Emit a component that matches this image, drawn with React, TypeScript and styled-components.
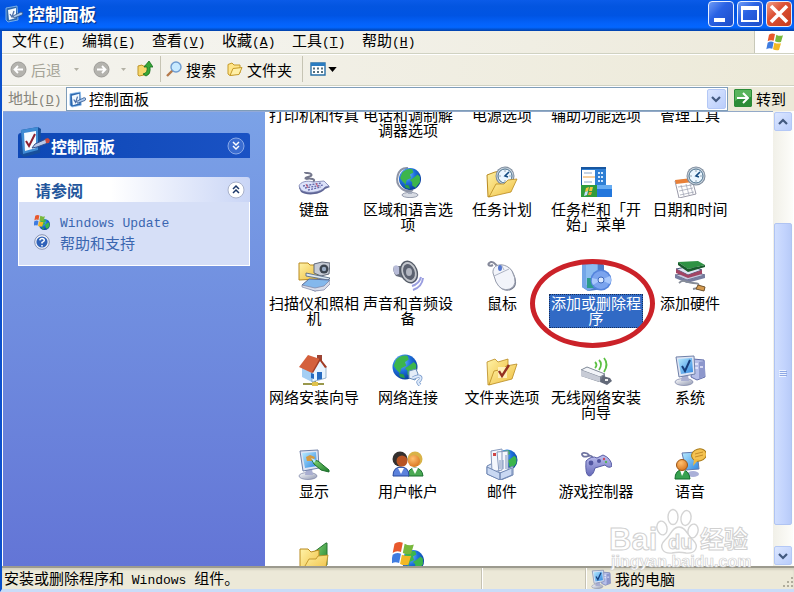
import React from "react";
import styled, { createGlobalStyle, css } from "styled-components";

const GlobalStyle = createGlobalStyle`
  * { box-sizing: border-box; }
  html, body, #root { height: 100%; margin: 0; }
  body {
    overflow: hidden;
    font-family: "Noto Sans CJK SC", sans-serif;
    font-size: 15px;
    line-height: 15px;
    color: #000;
  }
  button, input { font: inherit; color: inherit; margin: 0; padding: 0; border: 0; background: none; }
  svg { display: block; flex: none; }
`;

/* ---------- window frame ---------- */

const Window = styled.div`
  display: flex;
  flex-direction: column;
  height: 100vh;
  background: #ece9d8;
  border-left: 2px solid #0b50cc;
  border-bottom: 3px solid #c9dcf8;
`;

const TitleBar = styled.header`
  display: flex;
  align-items: center;
  gap: 5px;
  height: 31px;
  flex: none;
  margin-left: -2px;
  padding: 0 2px 3px 5px;
  background: linear-gradient(#0a5be8 0, #0355e0 20%, #0054e3 50%, #0462fa 75%, #0366ff 88%, #0140a8 100%);
`;

const TitleText = styled.h1`
  flex: 1;
  margin: 0;
  font-size: 17px;
  line-height: 20px;
  font-weight: 700;
  color: #fff;
  text-shadow: 1px 1px 1px #0a2f80;
`;

const Captions = styled.div`
  display: flex;
  gap: 3px;
`;

const CaptionButton = styled.button<{ $close?: boolean }>`
  display: grid;
  place-items: center;
  width: 26px;
  height: 26px;
  border: 1px solid #e6eeff;
  border-radius: 4px;
  background: ${(p) =>
    p.$close
      ? "linear-gradient(135deg, #f0a088, #dc5236 40%, #c53a1c)"
      : "linear-gradient(135deg, #6f9bf5, #2a62e4 40%, #1c4cc8)"};
`;

const Latin = styled.span`
  font-family: "Liberation Mono", monospace;
  font-size: 13px;
`;

const MenuBar = styled.nav`
  display: flex;
  flex: none;
  height: 23px;
  padding-left: 1px;
  border-bottom: 1px solid #d0d2c2;
  background: linear-gradient(90deg, #f6f6f3, #edeadb);
`;

const MenuButton = styled.button`
  width: 70px;
  padding: 0 9px 2px;
  text-align: left;
  white-space: nowrap;
`;

const Brand = styled.div`
  display: grid;
  place-items: center;
  width: 40px;
  margin-left: auto;
  background: #fff;
  border-left: 1px solid #c8c8b8;
`;

const ToolBar = styled.div`
  display: flex;
  align-items: center;
  flex: none;
  height: 32px;
  padding: 0 0 2px 8px;
  border-top: 1px solid #fff;
  border-bottom: 1px solid #d0d2c2;
  background: linear-gradient(90deg, #f4f3ee, #edead9);
`;

const ToolButton = styled.button<{ $gap?: number; $after?: number }>`
  display: flex;
  align-items: center;
  gap: ${(p) => p.$gap ?? 4}px;
  margin-right: ${(p) => p.$after ?? 0}px;
  white-space: nowrap;
  &:disabled { color: #a5a498; }
`;

const Divider = styled.span<{ $after: number }>`
  width: 1px;
  height: 26px;
  margin-right: ${(p) => p.$after}px;
  background: #c6c4b4;
`;

const AddressBar = styled.div`
  display: flex;
  align-items: center;
  flex: none;
  height: 25px;
  padding: 0 8px 0 6px;
  border-top: 1px solid #fff;
  background: linear-gradient(90deg, #f4f3ee, #ece9d8);
`;

const AddressLabel = styled.label`
  width: 58px;
  color: #85847a;
  white-space: nowrap;
`;

const AddressBox = styled.div`
  display: flex;
  align-items: center;
  flex: 1;
  height: 24px;
  padding: 0 1px 0 2px;
  border: 1px solid #7f9db9;
  background: #fff;
`;

const AddressInput = styled.input`
  flex: 1;
  min-width: 0;
  height: 20px;
  margin-left: 3px;
  padding-bottom: 2px;
  outline: none;
`;

const BlueButton = styled.button<{ $w: number; $h: number }>`
  display: grid;
  place-items: center;
  flex: none;
  width: ${(p) => p.$w}px;
  height: ${(p) => p.$h}px;
  border: 1px solid #b4c8f6;
  border-radius: 2px;
  background: linear-gradient(135deg, #dbe6ff, #b9cdfb);
`;

const GoButton = styled.button`
  display: flex;
  align-items: center;
  gap: 4px;
  margin-left: 6px;
  padding-bottom: 2px;
`;

/* ---------- body ---------- */

const Body = styled.div`
  display: flex;
  flex: 1;
  min-height: 0;
  padding-left: 1px;
  background: #fff;
`;

const Sidebar = styled.aside`
  flex: none;
  width: 262px;
  padding: 21px 15px 0;
  background: linear-gradient(#7ba2e7, #6375d6);
  border-top: 1px solid #93a9d8;
`;

const PanelTitle = styled.h2<{ $light?: boolean }>`
  display: flex;
  align-items: center;
  justify-content: space-between;
  height: 25px;
  margin: 0;
  padding: 0 5px 0 ${(p) => (p.$light ? 17 : 0)}px;
  font-size: 16px;
  font-weight: 700;
  line-height: 20px;
  border-radius: 3px 3px 0 0;
  color: ${(p) => (p.$light ? "#23569c" : "#fff")};
  background: ${(p) =>
    p.$light
      ? "linear-gradient(90deg, #fff 40%, #c9d5f6)"
      : "linear-gradient(90deg, #0d47b5, #1a52c4)"};
`;

const TitleGroup = styled.span`
  display: flex;
  align-items: center;
  gap: 1px;
  height: 25px;
`;

const Emblem = styled.span`
  margin-top: -8px;
`;

const SidePanel = styled.section`
  margin-top: 19px;
`;

const PanelBody = styled.ul`
  display: flex;
  flex-direction: column;
  gap: 3px;
  height: 64px;
  margin: 0;
  padding: 13px 0 0 15px;
  list-style: none;
  border: 1px solid #fff;
  border-top: 0;
  background: #d6dff7;
`;

const SideLink = styled.a`
  display: flex;
  align-items: center;
  gap: 10px;
  height: 16px;
  color: #3a66b0;
  text-decoration: none;
`;

const Content = styled.main`
  flex: 1;
  min-width: 0;
  overflow: hidden;
  padding-left: 2px;
  border-top: 1px solid #93a9c8;
`;

const IconGrid = styled.ul`
  display: grid;
  grid-template-columns: repeat(auto-fill, 94px);
  grid-auto-rows: 94px;
  margin: -40px 0 0;
  padding: 0;
  list-style: none;
`;

const Cell = styled.li`
  position: relative;
`;

const ItemButton = styled.button`
  display: flex;
  flex-direction: column;
  align-items: center;
  gap: 2px;
  width: 94px;
`;

const IconSlot = styled.span`
  width: 32px;
  height: 32px;
`;

const ItemLabel = styled.span<{ $selected?: boolean }>`
  max-width: 94px;
  padding: 1px 2px 3px;
  word-break: break-all;
  text-spacing-trim: space-all;
  ${(p) =>
    p.$selected &&
    css`
      color: #fff;
      background: #316ac5;
      outline: 1px dotted #16305c;
      outline-offset: -1px;
    `}
`;

const Ring = styled.span`
  position: absolute;
  left: -19px;
  top: -1px;
  width: 125px;
  height: 89px;
  border: 5px solid #cb2229;
  border-radius: 50%;
  pointer-events: none;
`;

const Watermark = styled.div`
  position: absolute;
  right: 43px;
  bottom: 17px;
  pointer-events: none;
`;

const ScrollBar = styled.div`
  display: flex;
  flex-direction: column;
  flex: none;
  width: 20px;
  margin-right: 1px;
  padding: 1px;
  background: linear-gradient(90deg, #f1f0e8, #fdfdfa);
`;

const Track = styled.div`
  display: flex;
  flex-direction: column;
  flex: 1;
`;

const TrackSpace = styled.div<{ $grow: number }>`
  flex: ${(p) => p.$grow};
`;

const Thumb = styled.div`
  display: grid;
  place-items: center;
  flex: 302;
  border: 1px solid #b0c4f2;
  border-radius: 2px;
  background: linear-gradient(90deg, #d0defe, #c2d3fd 60%, #b8cbf8);
`;

const StatusBar = styled.footer`
  display: flex;
  flex: none;
  height: 23px;
  border-top: 2px solid #9c9a8e;
  background: #ece9d8;
  box-shadow: inset 0 2px 2px #d4d1c0;
`;

const StatusCell = styled.div<{ $width?: number }>`
  display: flex;
  align-items: center;
  gap: 4px;
  ${(p) => (p.$width ? `width: ${p.$width}px; padding-left: 5px;` : "flex: 1; padding-left: 2px;")}
  white-space: pre;
  & + & {
    border-left: 1px solid #c5c2b2;
    box-shadow: inset 1px 0 #fff;
  }
`;

const Grip = styled.span`
  align-self: flex-end;
  margin-left: auto;
`;

/* ---------- artwork ---------- */

const HiddenSvg = styled.svg`
  position: absolute;
`;

const Defs = () => (
  <HiddenSvg width="0" height="0" aria-hidden="true">
    <defs>
      <radialGradient id="globe" cx="35%" cy="30%" r="75%">
        <stop offset="0" stopColor="#7cc4ff" />
        <stop offset="0.5" stopColor="#1d6fdc" />
        <stop offset="1" stopColor="#083a96" />
      </radialGradient>
      <linearGradient id="folder" x1="0" y1="0" x2="1" y2="1">
        <stop offset="0" stopColor="#fff3a8" />
        <stop offset="1" stopColor="#eebc3c" />
      </linearGradient>
      <linearGradient id="screen" x1="0" y1="0" x2="1" y2="1">
        <stop offset="0" stopColor="#b9ecff" />
        <stop offset="1" stopColor="#2f86e0" />
      </linearGradient>
      <linearGradient id="metal" x1="0" y1="0" x2="1" y2="1">
        <stop offset="0" stopColor="#ffffff" />
        <stop offset="1" stopColor="#8e96b0" />
      </linearGradient>
      <linearGradient id="lilac" x1="0" y1="0" x2="0" y2="1">
        <stop offset="0" stopColor="#c0c2f0" />
        <stop offset="1" stopColor="#6468b8" />
      </linearGradient>
      <linearGradient id="green" x1="0" y1="0" x2="1" y2="1">
        <stop offset="0" stopColor="#86d878" />
        <stop offset="1" stopColor="#1c7c2a" />
      </linearGradient>
      <radialGradient id="orange" cx="40%" cy="30%" r="75%">
        <stop offset="0" stopColor="#ffc070" />
        <stop offset="1" stopColor="#d8731c" />
      </radialGradient>
    </defs>
  </HiddenSvg>
);

const Svg = ({ s = 32, v = 32, children }: { s?: number; v?: number; children: React.ReactNode }) => (
  <svg width={s} height={s} viewBox={`0 0 ${v} ${v}`} fill="none" aria-hidden="true">
    {children}
  </svg>
);

const Checklist = ({ s }: { s: number }) => (
  <Svg s={s}>
    <path d="M3 4 20 1l3 2-1 24-16 4-4-3z" fill="#174f9c" />
    <path d="M3 4 20 1v23L5 28z" fill="#3f8bd4" />
    <path d="m6 7 12-2v17L7 25z" fill="#f4faff" />
    <path d="m8 15 3 5 6-12" stroke="#8c2030" strokeWidth="2" />
    <path d="m17 18 11-5 3 2-1 2-11 4-5 1z" fill="#b9c8e8" stroke="#34508c" />
    <path d="m27 13 3-1 2 2-1 3-3 0z" fill="#c94842" />
  </Svg>
);

/* Small version for bars: a blue-edged sheet with the pen lying across it. */
const ChecklistSmall = ({ s }: { s: number }) => (
  <Svg s={s} v={18}>
    <path d="m1 3 11-2 1 14-10 2-2-2z" fill="#2c68b0" stroke="#8fc0f0" strokeWidth="0.8" />
    <path d="m3 5 8-2v10l-7 2z" fill="#f2f9ff" />
    <path d="m5 9 2 3 2-6" stroke="#4b6ea8" strokeWidth="1.3" />
    <path d="m8 11 8-4 2 1-1 2-8 3z" fill="#a9c8ee" stroke="#2a5088" strokeWidth="0.8" />
  </Svg>
);

const Globe = ({ cx, cy, r }: { cx: number; cy: number; r: number }) => (
  <g transform={`translate(${cx} ${cy}) scale(${r / 10})`}>
    <circle r="10" fill="url(#globe)" />
    <path d="M-7-6Q-3-10 2-9l1 3-3 2 1 3-4 2-1 4-3-3-2-3zM3-1l4-3 2 2 0 5-4 5-3-2 0-3-2-2z" fill="#3cb54c" />
    <path d="M-5 5-1 6 0 9l-4-1z" fill="#2a9c48" />
  </g>
);

const Flag = () => (
  <g>
    <path d="M6 4q4-3 9-1l-2 10q-5-2-9 1z" fill="#e8582c" />
    <path d="M17 4q5 3 10 1l-3 10q-5 1-9-1z" fill="#78b83c" />
    <path d="M4 16q4-3 9-1l-2 10q-5-2-9 1z" fill="#3f7ce0" />
    <path d="M14 16q5 2 10 1l-3 10q-5 1-9-1z" fill="#f2b824" />
  </g>
);

const Folder = () => (
  <g stroke="#b98a20" strokeWidth="0.8">
    <path d="M1 8 9 5l3 3 10-3v19L2 31z" fill="url(#folder)" />
    <path d="m3 31 5-14 10-2 2-3 11-2-5 15z" fill="url(#folder)" />
  </g>
);

const Clock = ({ cx, cy }: { cx: number; cy: number }) => (
  <g transform={`translate(${cx} ${cy})`}>
    <circle r="9.5" fill="#7d8b9c" />
    <circle r="8.5" fill="#ccd6e0" />
    <circle r="7" fill="#eaf6ff" stroke="#4a708c" />
    <path d="M0-5.5v1M0 5.5v-1M-5.5 0h1M5.5 0h-1" stroke="#456" />
    <path d="m4-4-4 4 3 1" stroke="#124a80" strokeWidth="1.6" />
  </g>
);

const Monitor = () => (
  <g>
    <ellipse cx="10" cy="28" rx="9" ry="3.5" fill="url(#metal)" stroke="#7780a4" strokeWidth="0.7" />
    <path d="M8 21h6l1 6H7z" fill="#a9aed0" />
    <path d="m2 3 18-1 1 18L5 23z" fill="#dfe5f4" stroke="#7080a8" />
    <path d="m4 5 14-1 1 14-12 2z" fill="url(#screen)" />
  </g>
);

const art: Record<string, React.ReactNode> = {
  keyboard: (
    <>
      <path d="M15 16c4-3-3-4-7-3M8 13c-3-2 8-2 5-5-1-2-6 0-6-2" stroke="#74778c" strokeWidth="2" />
      <path d="M1 22c1-5 8-7 14-5l11-1 6 5-5 2c-4 6-19 7-24 3z" fill="#5e6494" />
      <path d="M1 20c1-4 8-6 14-4l11-1 5 5-4 1c-4 6-19 7-24 3z" fill="#dce2fa" stroke="#777fae" strokeWidth="0.8" />
      <path d="m5 20 19-3M7 22l18-3M10 24l13-3" stroke="#6267aa" strokeWidth="1.3" strokeDasharray="2 1.2" />
      <path d="m8 18 2 4M18 17l2 4" stroke="#c9586c" />
    </>
  ),
  region: (
    <>
      <ellipse cx="18" cy="29" rx="8" ry="2.6" fill="#d8dce4" stroke="#80889c" strokeWidth="0.8" />
      <path d="M16 23h4v5h-4z" fill="#a8b0c0" />
      <path d="M16 2C5 1 2 16 9 22q5 5 12 2" stroke="#8d94a6" strokeWidth="2" />
      <Globe cx={18} cy={13} r={11} />
    </>
  ),
  tasks: (
    <>
      <path d="M1 9 9 6l13-2v20L2 31z" fill="url(#folder)" stroke="#b98a20" />
      <Clock cx={19} cy={10} />
      <path d="m3 31 7-13 8 0 4-4 9-1-6 13z" fill="url(#folder)" stroke="#b98a20" strokeWidth="0.8" />
    </>
  ),
  taskbar: (
    <>
      <path d="M1 1h25v19H1z" fill="#1756a0" />
      <path d="M2 3h24v17H2z" fill="#2f7fd4" />
      <path d="M2 4h13v15H2z" fill="#fff" />
      <path d="M4 7h8M4 16h8" stroke="#8ba8c8" />
      <path d="M3 11h12" stroke="#eda040" />
      <path d="M18 7h6M18 11h6M18 15h6" stroke="#cfe7ff" strokeWidth="2" strokeDasharray="2 1" />
      <path d="M1 19h16v12H1z" fill="#2f9c3c" />
      <path d="M17 19h15v12H17z" fill="#2377dc" />
      <path d="M17 19h15v4H17z" fill="#66acf2" />
      <path d="m6 22 3-1-1 4-3 1zM10 21l3 0-1 4-3 0z" fill="#f4c43c" />
      <path d="m5 26 3-1-1 4-3 1z" fill="#c9e0ff" />
      <path d="m9 26 3 0-1 3-3 0z" fill="#e6a030" />
    </>
  ),
  date: (
    <>
      <path d="m1 15 17-2 4 15-17 4z" fill="#fff" stroke="#9a9aa8" />
      <path d="m1 14 17-2 1 4-17 2z" fill="#e88038" />
      <path d="m4 21 14-2M5 25l14-3M6 29l14-3M7 19l3 11M12 18l3 11M16 18l3 10" stroke="#a4a8b8" strokeWidth="0.8" />
      <Clock cx={22} cy={10} />
    </>
  ),
  scanner: (
    <>
      <path d="M1 3h9l2 2h8v14L1 20z" fill="url(#folder)" stroke="#b98a20" />
      <path d="m16 4 8-2 8 1-1 11-8 2-7-3z" fill="#c5cad4" stroke="#606878" />
      <circle cx="26" cy="9" r="4.5" fill="#3c4450" />
      <circle cx="26" cy="9" r="2.2" fill="#9aacc4" />
      <path d="m8 13 24 5-2 2-22-4z" fill="#dde8f4" stroke="#49607c" strokeWidth="0.8" />
      <path d="m4 25 7-6 21 1-6 8-9 3z" fill="#84b8ec" stroke="#5c6c94" />
      <path d="m4 25 13 3 9-2 6-6v4l-6 6-9 1-13-4z" fill="#d8dcea" stroke="#7c84a4" strokeWidth="0.7" />
    </>
  ),
  sound: (
    <>
      <path d="M19 23q5-2 6-6M20 26q7-2 9-9M21 30q9-3 10-12" stroke="#9a9ee0" strokeWidth="2" />
      <path d="M2 6h8l5-4 7 19-11-3-7-2q-4-5-2-10z" fill="#666c7c" />
      <path d="M2 6q3-2 5 1v7l-3 1q-4-4-2-9z" fill="#b8bcd8" />
      <ellipse cx="17" cy="12" rx="8" ry="11" transform="rotate(-20 17 12)" fill="#c3c6cc" stroke="#555c68" strokeWidth="1.4" />
      <ellipse cx="17" cy="12" rx="5.6" ry="8.2" transform="rotate(-20 17 12)" fill="#5c6270" />
      <ellipse cx="17" cy="12" rx="3" ry="4" fill="#b2b6c0" />
    </>
  ),
  mouse: (
    <>
      <path d="M15 7C9 8 10 1 5 2 0 4 3 7 7 5" stroke="#85899a" strokeWidth="2" />
      <path d="M8 14C7 4 21 2 27 12q7 14-2 18-9 3-14-7z" fill="#787e90" />
      <path d="M7 13C6 3 20 2 26 11q7 14-2 18-9 3-14-7z" fill="#f2f4fa" stroke="#969cac" />
      <path d="m8 16 15-7M15 4l3 6" stroke="#aeb4c4" />
      <ellipse cx="14" cy="8" rx="2" ry="3" fill="#5578d0" />
    </>
  ),
  programs: (
    <>
      <path d="m2 2 16-1 6 4v24l-16 2-6-4z" fill="#4c7cc8" />
      <path d="m2 2 16-1v25L8 31l-6-4z" fill="#74a6e8" />
      <path d="M6 5v20l11-1V4z" fill="#8cbcf0" />
      <path d="M7 18h8v10H7z" fill="#2c9c8c" />
      <circle cx="21" cy="20" r="10.5" fill="#5484dc" />
      <circle cx="21" cy="20" r="9" fill="#7ba4ee" />
      <path d="m21 20 9-4a9 9 0 0 1 0 8zM21 20l-8 5a9 9 0 0 1-1-7z" fill="#a8c8fc" />
      <circle cx="21" cy="20" r="3" fill="#dceaff" stroke="#3e69bc" />
    </>
  ),
  hardware: (
    <>
      <path d="m1 15 20-3 10 3-18 5z" fill="#c7cbe0" stroke="#6a7090" />
      <path d="m13 20 18-5v3l-18 5L1 18v-3z" fill="#777da0" />
      <path d="m2 9 15-3 11 4-14 5z" fill="#e0e4f4" stroke="#50587c" />
      <path d="m14 15 14-5v4l-14 4L2 13V9z" fill="#a24464" />
      <path d="m4 2 20-1 7 4-17 4z" fill="#2f9244" />
      <path d="m14 9 17-4v2l-17 5L4 5V2z" fill="#185c2c" />
      <path d="M5 23c5-5 7 0 14 0s6 2 5 5l-5 1" stroke="#868c98" strokeWidth="1.8" />
      <path d="m24 25 7 2-1 4-8-2z" fill="#d69b50" stroke="#70522c" />
    </>
  ),
  homeNet: (
    <>
      <path d="M17 25v5M5 30h21" stroke="#99984c" strokeWidth="2" />
      <path d="M14 28h6v4h-6z" fill="#e0c24c" />
      <path d="M19 1h5v9h-5z" fill="#9c4434" />
      <path d="m4 13 10 4v11L4 23z" fill="#a4cff4" />
      <path d="m14 17 8-11 6 7v11l-14 4z" fill="#e7f4ff" stroke="#7598b8" strokeWidth="0.7" />
      <path d="M1 13 10 1l12 4-8 14z" fill="#d4603c" />
      <path d="m22 4 7 9-2 1-5-7-7 12-1-1z" fill="#a23c24" />
      <path d="M19 18h5v7l-5 1zM13 19l3 1v5l-3-1z" fill="#286cc0" />
    </>
  ),
  network: (
    <>
      <Globe cx={13} cy={13} r={12.5} />
      <path d="m17 17 7-2 2 5-3 6-6-2z" fill="#e4edf8" stroke="#668cb8" />
      <path d="M21 24c10-5 8 2 6 3s0 3 1 4" stroke="#7b9ccc" strokeWidth="3.6" />
      <path d="M21 24c10-5 8 2 6 3s0 3 1 4" stroke="#dce9fa" strokeWidth="2" />
    </>
  ),
  folderOpt: (
    <>
      <Folder />
      <path d="M12 13h9v11h-9z" fill="#fff0b8" />
      <path d="m13 17 3 5 7-11" stroke="#943020" strokeWidth="2.4" />
    </>
  ),
  wireless: (
    <>
      <path d="M15 8q3 3 0 6M19 6q4 4 0 10M24 4q5 6 0 14" stroke="#5cc044" strokeWidth="1.8" />
      <path d="m1 16 6-3 18 7v7l-6 1L1 22z" fill="#767e8c" />
      <path d="m1 16 6-3 18 7-5 3z" fill="#f2f4f8" stroke="#858e9c" />
      <path d="m1 16 19 7v5L1 22z" fill="#c8ccd6" />
      <path d="m23 22 7 2 2 3-5 4-7-3z" fill="#626978" />
      <path d="M25 25h3v2h-3z" fill="#eee" />
    </>
  ),
  system: (
    <>
      <path d="m19 5 11 1 1 17-8 3-6-3z" fill="#b5bee8" stroke="#626eaa" />
      <path d="M25 8v17l6-3V7z" fill="#8d97cc" />
      <path d="m20 10 4 0M20 14l4 0M26 13h3" stroke="#eef" strokeWidth="1.5" />
      <Monitor />
      <path d="m8 12 3 5 5-11" stroke="#173f7c" strokeWidth="2" />
    </>
  ),
  display: (
    <>
      <Monitor />
      <path d="m8 9 4-2 5 2-2 4-6 0z" fill="#d49a40" />
      <path d="m14 12 6 1 11 9v2l-8-2-7-6z" fill="url(#green)" stroke="#1b6c2a" />
      <path d="m13 10 5 2-2 3z" fill="#b8ecff" />
    </>
  ),
  users: (
    <>
      <path d="M16 28q0-8 7-8t8 8z" fill="#4caa54" stroke="#1b7030" />
      <path d="m20 20 3 6 3-6z" fill="#fff" />
      <circle cx="23" cy="11" r="7.5" fill="#d9b348" />
      <circle cx="22" cy="13" r="6" fill="url(#orange)" />
      <path d="M1 28q0-9 8-9t8 9z" fill="#5c82dc" stroke="#27489c" />
      <path d="m6 20 3 6 3-6z" fill="#fff" />
      <circle cx="8" cy="11" r="7.5" fill="#34302e" />
      <circle cx="10" cy="13" r="5.5" fill="#b85424" />
    </>
  ),
  mail: (
    <>
      <Globe cx={21} cy={12} r={10.5} />
      <path d="m1 18 6-3 16 5 4-2v9l-12 5L1 26z" fill="#d8e2f4" stroke="#6c84b0" />
      <path d="m5 3 11-2v21L6 24zM11 4l11-1v20l-9 2z" fill="#f4f7fd" stroke="#8799bc" />
      <path d="M7 5h3v3H7z" fill="#cf4646" />
      <path d="M14 12v9M17 12v9M20 7v14" stroke="#7c92bc" />
      <path d="m1 19 13 6v7L1 26zM14 25l12-5v7l-12 5z" fill="#c9d8f2" stroke="#7188b4" />
    </>
  ),
  game: (
    <>
      <path d="M13 10c-3-6-6 1-10-2-4-4 4-4 6-1" stroke="#6f74a0" strokeWidth="1.8" />
      <path d="M6 13q6-6 11-3l6-3q8 3 9 11-3 3-7-1l-10 3q-2 8-6 8-4-1-3-15z" fill="url(#lilac)" stroke="#575ca4" />
      <circle cx="11" cy="15" r="2.4" fill="#5055a0" />
      <circle cx="19" cy="13" r="2" fill="#5055a0" />
      <circle cx="24" cy="11" r="1.2" fill="#c84c60" />
      <circle cx="26" cy="14" r="1.2" fill="#54b45c" />
    </>
  ),
  speech: (
    <>
      <ellipse cx="19" cy="26" rx="6" ry="3" fill="#aab0d8" />
      <path d="m8 5 15-1 2 17-13 1z" fill="url(#screen)" stroke="#627ab0" />
      <ellipse cx="25" cy="7" rx="7.5" ry="6" transform="rotate(-15 25 7)" fill="#f4c250" stroke="#a87a18" />
      <path d="m20 11-1 7 6-7z" fill="#f0b840" />
      <path d="m21 6 8-2M21 9l8-2" stroke="#c48c28" />
      <path d="M1 31q0-9 7-9t8 9z" fill="#37a250" stroke="#126c2c" />
      <path d="m6 22 2 6 3-6z" fill="#fff" />
      <circle cx="8" cy="17" r="5.5" fill="url(#orange)" stroke="#9c5514" />
    </>
  ),
  fonts: (
    <>
      <path d="m16 10 12-9 1 0v22l-11 4z" fill="url(#green)" stroke="#267434" />
      <path d="M2 7h8l3 3 8-2v17L2 32z" fill="url(#folder)" stroke="#b98a20" />
      <path d="m3 31 8-14 7 0 2-3 10-1-3 18z" fill="url(#folder)" stroke="#b98a20" strokeWidth="0.8" />
    </>
  ),
  update: (
    <>
      <Globe cx={21} cy={19} r={11} />
      <g transform="translate(-3 -2) scale(.92)">
        <Flag />
      </g>
    </>
  ),
};

const Disc = ({ forward }: { forward?: boolean }) => (
  <Svg s={17} v={17}>
    <circle cx="8.5" cy="8.5" r="7.5" fill="#b4b3ae" stroke="#9d9c98" />
    <path
      d={forward ? "M4 8.5h8M9 5l3.5 3.5L9 12" : "M13 8.5H5M8 5 4.500 8.500 8 12"}
      stroke="#fff"
      strokeWidth="1.8"
    />
  </Svg>
);
const Caret = ({ dark }: { dark?: boolean }) => (
  <svg width={dark ? 9 : 5} height={dark ? 5 : 3} viewBox="0 0 10 6" aria-hidden="true">
    <path d="M0 0h10L5 6z" fill={dark ? "#000" : "#b3b1a5"} />
  </svg>
);
const Chevron = ({ up }: { up?: boolean }) => (
  <Svg s={10} v={10}>
    <path d={up ? "m1 7 4-4 4 4" : "m1 3 4 4 4-4"} stroke="#42597f" strokeWidth="2.2" />
  </Svg>
);
const RoundChevron = ({ up }: { up?: boolean }) => (
  <Svg s={18} v={18}>
    <circle cx="9" cy="9" r="8" fill={up ? "#fff" : "#3a6cd0"} stroke={up ? "#a9b2ca" : "#88a8e8"} />
    <path
      d={up ? "m6 8 3-3 3 3M6 12l3-3 3 3" : "m6 5 3 3 3-3M6 9l3 3 3-3"}
      stroke={up ? "#1c3868" : "#fff"}
      strokeWidth="1.5"
    />
  </Svg>
);

const SmallFolder = () => (
  <Svg s={16} v={16}>
    <path d="M1 3.5 5 2l2 2h6v8L3 14.5 1 13z" fill="#ffe58a" stroke="#c59a28" />
    <path d="m3 14.5 3-7 9-1-3 7z" fill="#fff0a8" stroke="#c59a28" />
  </Svg>
);

const PaperMark = () => (
  <svg width="142" height="70" viewBox="0 0 142 70" aria-hidden="true">
    <g fill="#fff" stroke="#d4d4d4" strokeWidth="1.4">
      <ellipse cx="53" cy="23" rx="5" ry="7" transform="rotate(-15 53 23)" />
      <ellipse cx="64" cy="12" rx="5" ry="7.5" />
      <ellipse cx="77" cy="13" rx="5" ry="7.5" transform="rotate(10 77 13)" />
      <ellipse cx="84" cy="26" rx="5" ry="7" transform="rotate(15 84 26)" />
      <path d="M70 22c7 0 8 8 14 13 7 7 2 14-7 13-5-1-9-1-14 0-9 1-14-6-7-13 6-5 7-13 14-13z" />
    </g>
    <g fontFamily="Liberation Sans, sans-serif" fontWeight="700" fill="#fff" stroke="#d0d0d0">
      <text x="0" y="45" fontSize="31">Bai</text>
      <text x="59" y="44" fontSize="20">du</text>
      <text x="91" y="43" fontSize="24" fontFamily="Noto Sans CJK SC, sans-serif">经验</text>
      <text x="2" y="62" fontSize="16" strokeWidth="0.7">jingyan.baidu.com</text>
    </g>
  </svg>
);

/* ---------- data ---------- */

const menus = [
  ["文件", "F"],
  ["编辑", "E"],
  ["查看", "V"],
  ["收藏", "A"],
  ["工具", "T"],
  ["帮助", "H"],
];

const items: { label: string; icon?: string; selected?: boolean }[] = [
  { label: "打印机和传真" },
  { label: "电话和调制解调器选项" },
  { label: "电源选项" },
  { label: "辅助功能选项" },
  { label: "管理工具" },
  { label: "键盘", icon: "keyboard" },
  { label: "区域和语言选项", icon: "region" },
  { label: "任务计划", icon: "tasks" },
  { label: "任务栏和「开始」菜单", icon: "taskbar" },
  { label: "日期和时间", icon: "date" },
  { label: "扫描仪和照相机", icon: "scanner" },
  { label: "声音和音频设备", icon: "sound" },
  { label: "鼠标", icon: "mouse" },
  { label: "添加或删除程序", icon: "programs", selected: true },
  { label: "添加硬件", icon: "hardware" },
  { label: "网络安装向导", icon: "homeNet" },
  { label: "网络连接", icon: "network" },
  { label: "文件夹选项", icon: "folderOpt" },
  { label: "无线网络安装向导", icon: "wireless" },
  { label: "系统", icon: "system" },
  { label: "显示", icon: "display" },
  { label: "用户帐户", icon: "users" },
  { label: "邮件", icon: "mail" },
  { label: "游戏控制器", icon: "game" },
  { label: "语音", icon: "speech" },
  { label: "", icon: "fonts" },
  { label: "", icon: "update" },
];

const Mnemonic = ({ k }: { k: string }) => (
  <Latin>
    (<u>{k}</u>)
  </Latin>
);

export default function App() {
  return (
    <Window>
      <GlobalStyle />
      <Defs />
      <TitleBar>
        <ChecklistSmall s={18} />
        <TitleText>控制面板</TitleText>
        <Captions>
          <CaptionButton aria-label="最小化">
            <Svg s={20} v={20}>
              <path d="M3 16h11" stroke="#fff" strokeWidth="4" />
            </Svg>
          </CaptionButton>
          <CaptionButton aria-label="最大化">
            <Svg s={20} v={20}>
              <path d="M2 4h16" stroke="#fff" strokeWidth="4" />
              <path d="M2 3h16v14H2z" stroke="#fff" strokeWidth="2" />
            </Svg>
          </CaptionButton>
          <CaptionButton $close aria-label="关闭">
            <Svg s={20} v={20}>
              <path d="m2 2 16 16M18 2 2 18" stroke="#fff" strokeWidth="3.6" />
            </Svg>
          </CaptionButton>
        </Captions>
      </TitleBar>

      <MenuBar>
        {menus.map(([name, key]) => (
          <MenuButton key={key}>
            {name}
            <Mnemonic k={key} />
          </MenuButton>
        ))}
        <Brand>
          <Svg s={20} v={30}>
            <Flag />
          </Svg>
        </Brand>
      </MenuBar>

      <ToolBar>
        <ToolButton disabled $after={13}>
          <Disc />
          后退
        </ToolButton>
        <ToolButton disabled $after={14} aria-label="后退历史">
          <Caret />
        </ToolButton>
        <ToolButton disabled $after={11} aria-label="前进">
          <Disc forward />
        </ToolButton>
        <ToolButton disabled $after={11} aria-label="前进历史">
          <Caret />
        </ToolButton>
        <ToolButton $after={7} aria-label="向上">
          <Svg s={16} v={16}>
            <path d="M1 5 5 4l1 1h6v8l-10 2-1-1z" fill="#f7d76c" stroke="#bd9429" />
            <path d="M6 13q5-1 4-7H7l5-6 4 6h-3q1 7-4 9z" fill="#37a838" stroke="#14701c" strokeWidth="0.8" />
          </Svg>
        </ToolButton>
        <Divider $after={5} />
        <ToolButton $after={11}>
          <Svg s={16} v={16}>
            <path d="m7 9-6 6" stroke="#b57a4a" strokeWidth="2.4" />
            <circle cx="10" cy="6" r="5" fill="#c8eaff" stroke="#6f9cd0" strokeWidth="1.4" />
          </Svg>
          搜索
        </ToolButton>
        <ToolButton $after={10}>
          <SmallFolder />
          文件夹
        </ToolButton>
        <Divider $after={7} />
        <ToolButton $gap={2} aria-label="查看方式">
          <Svg s={16} v={16}>
            <path d="M1 2h14v12H1z" fill="#fff" stroke="#2870a8" strokeWidth="1.4" />
            <path d="M1 2h14v3H1z" fill="#2a7cc0" />
            <path d="M3 7.5h10M3 11h10" stroke="#55707c" strokeWidth="1.8" strokeDasharray="2 2" />
          </Svg>
          <Caret dark />
        </ToolButton>
      </ToolBar>

      <AddressBar>
        <AddressLabel htmlFor="address">
          地址
          <Mnemonic k="D" />
        </AddressLabel>
        <AddressBox>
          <ChecklistSmall s={17} />
          <AddressInput id="address" defaultValue="控制面板" />
          <BlueButton $w={19} $h={20} aria-label="展开地址列表">
            <Chevron />
          </BlueButton>
        </AddressBox>
        <GoButton>
          <Svg s={18} v={18}>
            <path d="M1 0h16l1 1v16l-1 1H1l-1-1V1z" fill="#2b8c38" />
            <path d="M1 1h16v7Q8 7 1 12z" fill="#59b45c" />
            <path d="M3 9h11M9 4l5 5-5 5" stroke="#fff" strokeWidth="2" />
          </Svg>
          转到
        </GoButton>
      </AddressBar>

      <Body>
        <Sidebar>
          <PanelTitle>
            <TitleGroup>
              <Emblem>
                <Checklist s={32} />
              </Emblem>
              控制面板
            </TitleGroup>
            <button aria-label="展开">
              <RoundChevron />
            </button>
          </PanelTitle>
          <SidePanel>
            <PanelTitle $light>
              请参阅
              <button aria-label="收起">
                <RoundChevron up />
              </button>
            </PanelTitle>
            <PanelBody>
              <li>
                <SideLink href="#update">
                  <Svg s={16}>{art.update}</Svg>
                  <Latin>Windows Update</Latin>
                </SideLink>
              </li>
              <li>
                <SideLink href="#help">
                  <Svg s={16} v={16}>
                    <circle cx="8" cy="8" r="7.3" fill="#f4f6fc" stroke="#8490b0" />
                    <circle cx="8" cy="8" r="5.6" fill="#2f62b8" />
                    <path d="M5.8 6.4q.2-2 2.3-2t2.2 1.8Q10.3 7.4 8 8.4v1.2M8 11v1.4" stroke="#fff" strokeWidth="1.5" />
                  </Svg>
                  帮助和支持
                </SideLink>
              </li>
            </PanelBody>
          </SidePanel>
        </Sidebar>

        <Content>
          <IconGrid>
            {items.map((it, i) => (
              <Cell key={i}>
                <ItemButton aria-label={it.label || it.icon}>
                  <IconSlot>{it.icon && <Svg>{art[it.icon]}</Svg>}</IconSlot>
                  {it.label && <ItemLabel $selected={it.selected}>{it.label}</ItemLabel>}
                </ItemButton>
                {it.selected && <Ring />}
              </Cell>
            ))}
          </IconGrid>
        </Content>

        <ScrollBar>
          <BlueButton $w={18} $h={19} aria-label="向上滚动">
            <Chevron up />
          </BlueButton>
          <Track>
            <TrackSpace $grow={93} />
            <Thumb>
              <Svg s={8} v={8}>
                <path d="M0 .5h7M0 2.5h7M0 4.500h7M0 6.500h7" stroke="#eef4ff" />
                <path d="M1 1.500h7M1 3.500h7M1 5.500h7" stroke="#8ea8e4" />
              </Svg>
            </Thumb>
            <TrackSpace $grow={21} />
          </Track>
          <BlueButton $w={18} $h={19} aria-label="向下滚动">
            <Chevron />
          </BlueButton>
        </ScrollBar>
      </Body>

      <StatusBar>
        <StatusCell>
          <span>
            安装或删除程序和<Latin> Windows </Latin>组件。
          </span>
        </StatusCell>
        <StatusCell $width={104} />
        <StatusCell $width={209}>
          <Svg s={20}>{art.system}</Svg>
          我的电脑
          <Grip>
            <Svg s={14} v={14}>
              <path d="M11 2h2v2h-2zM7 6h2v2H7zM11 6h2v2h-2zM3 10h2v2H3zM7 10h2v2H7zM11 10h2v2h-2z" fill="#b0ad9c" />
            </Svg>
          </Grip>
        </StatusCell>
      </StatusBar>
      <Watermark>
        <PaperMark />
      </Watermark>
    </Window>
  );
}
